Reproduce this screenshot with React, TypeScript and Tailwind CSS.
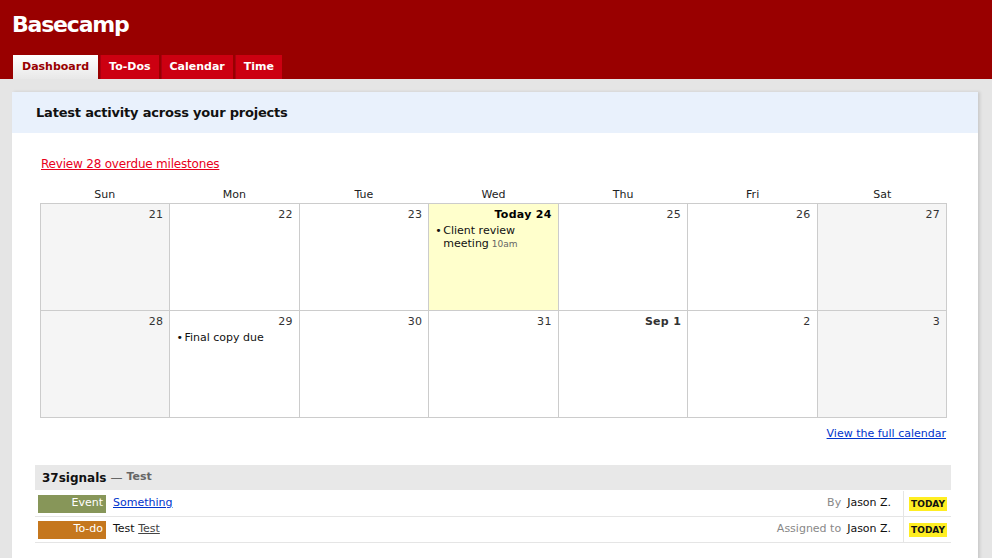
import React from "react";

type Day = {
  label: string;
  weekend?: boolean;
  today?: boolean;
  bold?: boolean;
  event?: { title: string; time?: string };
};

const weeks: Day[][] = [
  [
    { label: "21", weekend: true },
    { label: "22" },
    { label: "23" },
    { label: "Today 24", today: true, bold: true, event: { title: "Client review meeting", time: "10am" } },
    { label: "25" },
    { label: "26" },
    { label: "27", weekend: true },
  ],
  [
    { label: "28", weekend: true },
    { label: "29", event: { title: "Final copy due" } },
    { label: "30" },
    { label: "31" },
    { label: "Sep 1", bold: true },
    { label: "2" },
    { label: "3", weekend: true },
  ],
];

const dayNames = ["Sun", "Mon", "Tue", "Wed", "Thu", "Fri", "Sat"];

const tabs = ["Dashboard", "To-Dos", "Calendar", "Time"];

export default function App() {
  return (
    <div className="min-h-screen bg-[#e5e5e5] font-['DejaVu_Sans',sans-serif] text-[#111]">
      {/* Header */}
      <div className="bg-[#990000] h-[79px] flex flex-col justify-between">
        <h1 className="text-white text-[22px] font-bold pl-3 pt-[10px] leading-[30px] tracking-[-1.2px]">Basecamp</h1>
        <div className="flex pl-[13px] gap-[2px]">
          {tabs.map((t, i) => (
            <div
              key={t}
              className={
                i === 0
                  ? "h-6 px-[9px] flex items-center text-[11px] font-bold text-[#990000] bg-gradient-to-b from-white to-[#e8e8e8]"
                  : "h-6 px-[8px] flex items-center text-[11px] font-bold text-white bg-[#cc0011] border-l border-[#aa0011]"
              }
            >
              {t}
            </div>
          ))}
        </div>
      </div>

      {/* Panel */}
      <div className="pl-3 pr-[14px] pt-[13px]">
        <div className="bg-white shadow-[2px_0_3px_rgba(0,0,0,0.12)] min-h-[480px]">
          <div className="bg-[#e9f1fc] h-[41px] flex items-center pl-6">
            <h2 className="text-[13px] font-bold tracking-[-0.2px]">Latest activity across your projects</h2>
          </div>

          <div className="pl-[23px] pr-[27px] pt-[18px]">
            <div className="pl-[6px]">
              <a href="#" className="text-[12px] text-[#e8001c] underline tracking-[-0.2px]">
                Review 28 overdue milestones
              </a>
            </div>

            {/* Calendar */}
            <div className="ml-[5px] mr-[4px] mt-[12px]">
              <div className="grid grid-cols-7 text-[11px] text-[#222] h-[15px] leading-[15px]">
                {dayNames.map((d) => (
                  <div key={d} className="text-center">{d}</div>
                ))}
              </div>
              <div className="mt-[1px] border-t border-l border-[#cccccc]">
                {weeks.map((w, wi) => (
                  <div key={wi} className="grid grid-cols-7">
                    {w.map((d, di) => (
                      <div
                        key={di}
                        className={`h-[107px] border-r border-b border-[#cccccc] px-[6px] pt-[3px] ${
                          d.today ? "bg-[#ffffcc]" : d.weekend ? "bg-[#f5f5f5]" : "bg-white"
                        }`}
                      >
                        <div
                          className={`text-right text-[11px] leading-[15px] tracking-[0.3px] ${
                            d.today ? "font-bold text-black" : d.bold ? "font-bold text-[#333]" : "text-[#333]"
                          }`}
                        >
                          {d.label}
                        </div>
                        {d.event && (
                          <div className="flex text-[11px] leading-[13px] mt-[2px]">
                            <span className="w-[8px] shrink-0">•</span>
                            <span>
                              {d.event.title}
                              {d.event.time && <span className="text-[9px] text-[#666]"> {d.event.time}</span>}
                            </span>
                          </div>
                        )}
                      </div>
                    ))}
                  </div>
                ))}
              </div>
              <div className="text-right pt-[6px] pr-[1px] leading-[15px]">
                <a href="#" className="text-[11px] text-[#0033cc] underline">View the full calendar</a>
              </div>
            </div>

            {/* Project activity */}
            <div className="mt-[24px]">
              <div className="bg-[#e8e8e8] h-[25px] flex items-center pl-[7px] text-[12px] font-bold">
                <span>37signals</span>
                <span className="text-[#666] font-normal ml-1">—</span>
                <span className="text-[#666] text-[11px] ml-1">Test</span>
              </div>
              {[
                { type: "Event", color: "bg-[#879659]", item: <a href="#" className="text-[#0033cc] underline">Something</a>, who: "By" },
                {
                  type: "To-do",
                  color: "bg-[#c5771e]",
                  item: (
                    <span>
                      Test <a href="#" className="text-[#444] underline">Test</a>
                    </span>
                  ),
                  who: "Assigned to",
                },
              ].map((r, i) => (
                <div
                  key={r.type}
                  className={`flex items-stretch h-[26px] border-b border-[#e5e5e5] text-[11px] ${i === 0 ? "mt-[1px]" : ""}`}
                >
                  <div className="flex items-center pl-[3px]">
                    <span className={`${r.color} text-white w-[68px] h-[18px] flex items-center justify-end pr-[3px]`}>
                      {r.type}
                    </span>
                  </div>
                  <div className="flex items-center pl-[7px] flex-1">{r.item}</div>
                  <div className="flex items-center pr-[12px]">
                    <span className="text-[#888] mr-[6px]">{r.who}</span>
                    <span>Jason Z.</span>
                  </div>
                  <div className="flex items-center border-l border-[#e5e5e5] pl-[5px] pr-[4px]">
                    <span className="bg-[#ffee22] text-[9px] font-bold px-[2px] leading-[14px]">TODAY</span>
                  </div>
                </div>
              ))}
            </div>
          </div>
        </div>
      </div>
    </div>
  );
}
